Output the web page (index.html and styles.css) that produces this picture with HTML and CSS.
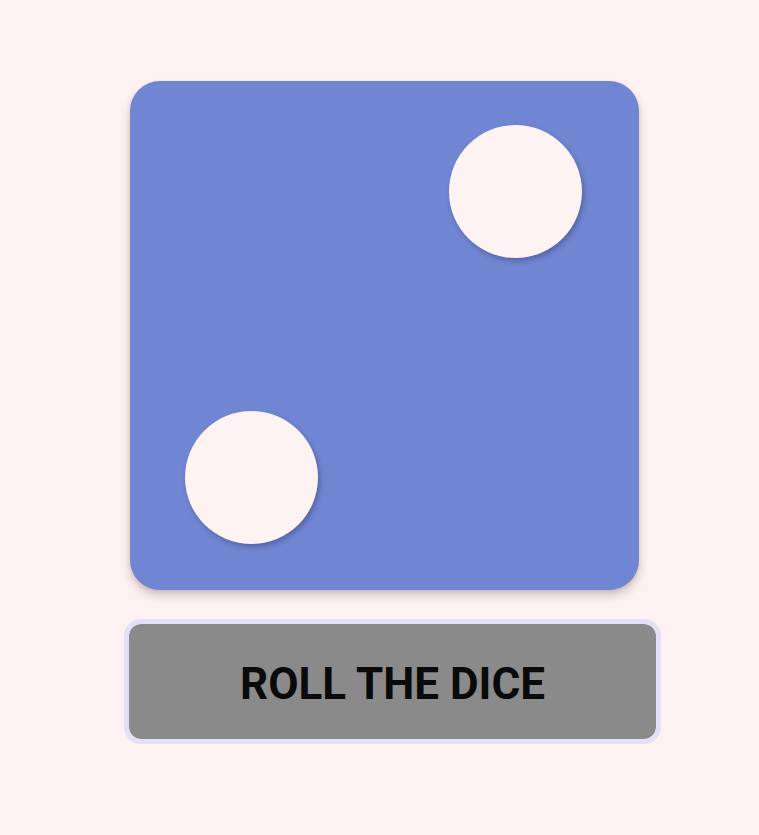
FILE: index.html
```html
<!DOCTYPE html>
<html>
<head>
<meta charset="utf-8">
<link rel="stylesheet" href="styles.css">
</head>
<body>
<main class="app">
  <div class="die">
    <div class="pip pip-tr"></div>
    <div class="pip pip-bl"></div>
  </div>
  <button class="roll">ROLL THE DICE</button>
</main>
</body>
</html>
```
FILE: styles.css
```css
html, body {
  margin: 0;
  padding: 0;
  background: #fdf1f1;
  height: 100%;
}
.app {
  display: flex;
  flex-direction: column;
  align-items: flex-start;
  padding-top: 81px;
  padding-left: 124px;
  font-family: Roboto, "Liberation Sans", sans-serif;
}
.die {
  box-sizing: border-box;
  margin-left: 6px;
  width: 509px;
  height: 509px;
  border-radius: 30px;
  background: #7086d2;
  box-shadow: 0 6px 10px rgba(90, 60, 60, 0.22), 0 2px 4px rgba(90, 60, 60, 0.12);
  padding: 44px 57px 46px 55px;
  display: flex;
  flex-direction: column;
  justify-content: space-between;
}
.pip {
  width: 133px;
  height: 133px;
  border-radius: 50%;
  background: #fdf3f3;
  box-shadow: 2px 3px 5px rgba(40, 40, 90, 0.35);
}
.pip-tr { align-self: flex-end; }
.pip-bl { align-self: flex-start; }
.roll {
  margin-top: 29px;
  box-sizing: border-box;
  width: 537px;
  height: 125px;
  border: 5px solid #e4dff9;
  border-radius: 17px;
  background: #8a8a8a;
  background-clip: padding-box;
  color: #0a0a0a;
  font-family: Roboto, "Liberation Sans", sans-serif;
  font-weight: 700;
  font-size: 44px;
  padding: 4px 0 0 0;
  display: flex;
  align-items: center;
  justify-content: center;
}
```
